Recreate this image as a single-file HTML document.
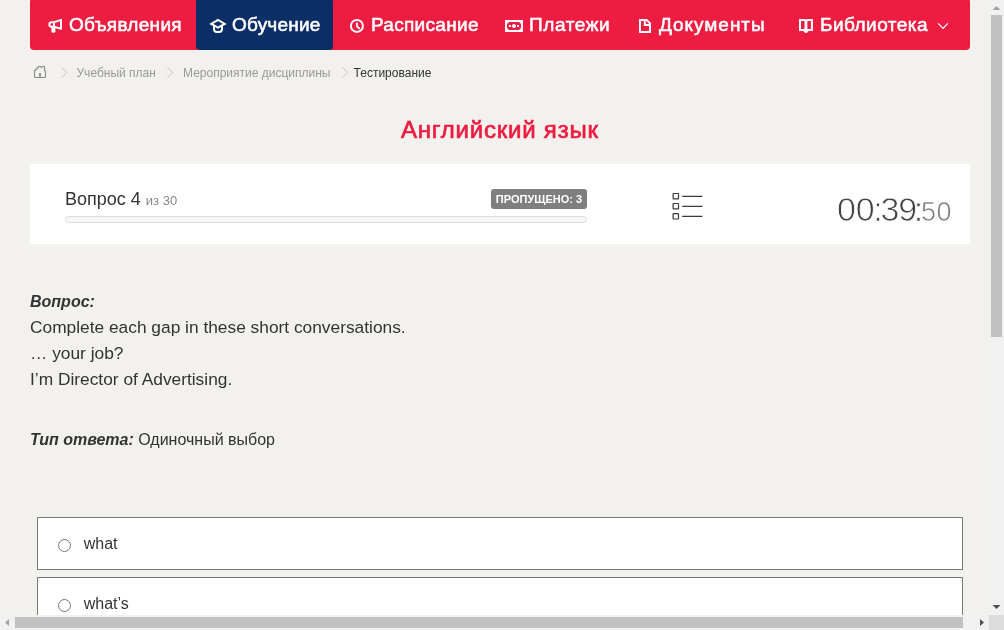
<!DOCTYPE html>
<html lang="ru">
<head>
<meta charset="utf-8">
<title>Тестирование</title>
<style>
*{box-sizing:border-box;margin:0;padding:0}
html,body{width:1004px;height:630px;overflow:hidden}
body{background:#f3f1ee;font-family:"Liberation Sans",sans-serif;color:#333;position:relative}
#wrap{position:absolute;left:0;top:0;width:1004px;height:630px;will-change:transform}
/* nav */
#nav{position:absolute;left:30px;top:-2px;width:940px;height:52px;background:#ed1c40;border-radius:4px}
#act{position:absolute;left:196px;top:-2px;width:137px;height:52px;background:#0b2e66;border-radius:4px}
.ni{position:absolute;top:13px;height:24px;line-height:24px;color:#fff;font-weight:normal;font-size:19px;white-space:nowrap;-webkit-text-stroke:0.55px #fff;transform-origin:0 50%}
#icons{position:absolute;left:0;top:0;width:1004px;height:100px;overflow:visible}
/* breadcrumb */
.bc{position:absolute;top:66px;font-size:12px;line-height:14px;color:#999;white-space:nowrap}
.bc.cur{color:#333}
/* title */
#title{position:absolute;left:401px;top:115px;font-weight:normal;font-size:24px;line-height:30px;color:#ed1c40;white-space:nowrap;-webkit-text-stroke:0.7px #ed1c40;letter-spacing:0.78px}
/* panel */
#panel{position:absolute;left:30px;top:164px;width:940px;height:80px;background:#fff}
#qn{position:absolute;left:65px;top:188px;font-size:18px;line-height:22px;color:#333;white-space:nowrap}
#qn small{font-size:13px;color:#888}
#badge{position:absolute;left:491px;top:189px;width:96px;height:20px;background:#7f7f7f;border-radius:3px;color:#fff;font-weight:bold;font-size:11px;line-height:20px;text-align:center;white-space:nowrap}
#prog{position:absolute;left:65px;top:216px;width:522px;height:7px;border:1px solid #ddd;border-radius:4px;background:#f7f7f7}
.tg{position:absolute;color:#444;white-space:nowrap;-webkit-text-stroke:0.75px #fff;text-align:center;width:30px;margin-left:-15px}
.tb{font-size:34px;line-height:34px;top:192px}
.ts{font-size:27px;line-height:27px;top:199px;color:#7c7c7c;-webkit-text-stroke:0.55px #fff}
/* question */
.q{position:absolute;left:30px;font-size:17.333px;line-height:26px;white-space:nowrap;color:#333}
.q b{font-style:italic;font-size:16px}
.q span{font-size:16px}
/* answers */
.ans{position:absolute;left:37px;width:926px;height:53px;background:#fff;border:1px solid #767676}
.ans .r{position:absolute;left:20px;top:21px;width:13px;height:13px;border:1px solid #767676;border-radius:50%;background:#fff}
.ans .t{position:absolute;left:45.7px;top:15px;font-size:16px;line-height:22px;color:#333}
/* scrollbars */
#vsb{position:absolute;left:989px;top:0;width:15px;height:615px;background:#f1f1f1}
#vsb .th{position:absolute;left:2px;top:15px;width:11px;height:322px;background:#c1c1c1}
#hsb{position:absolute;left:0;top:615px;width:989px;height:15px;background:#f1f1f1}
#hsb .th{position:absolute;left:15px;top:2px;width:948px;height:11px;background:#c1c1c1}
#corner{position:absolute;left:989px;top:615px;width:15px;height:15px;background:#dcdcdc}
#sbarrows{position:absolute;left:0;top:0;width:1004px;height:630px;pointer-events:none}
</style>
</head>
<body>
<div id="wrap">
<div id="nav"></div>
<div id="act"></div>
<div class="ni" style="left:69px;letter-spacing:0.3px">Объявления</div>
<div class="ni" style="left:232px;letter-spacing:0.2px">Обучение</div>
<div class="ni" style="left:371px;letter-spacing:0.3px">Расписание</div>
<div class="ni" style="left:529px;letter-spacing:0.6px">Платежи</div>
<div class="ni" style="left:659px;letter-spacing:0.97px">Документы</div>
<div class="ni" style="left:820px;letter-spacing:0.48px">Библиотека</div>

<svg id="icons" viewBox="0 0 1004 100" fill="none" stroke="#fff" stroke-width="2" stroke-linejoin="round" stroke-linecap="round">
  <!-- megaphone -->
  <path d="M54 22.2H51.6a2.25 2.25 0 0 0 0 4.5H54"/>
  <path d="M54 22.2L61 19.9V28.8L54 26.7Z"/>
  <rect x="51.4" y="26" width="4" height="6.8" rx="1.6" fill="#fff" stroke="none"/>
  <!-- graduation cap -->
  <path d="M211.3 23.9L218 20L224.7 23.9L218 27.6Z" stroke-linejoin="miter"/>
  <path d="M214 26.2V29A2.9 2.9 0 0 0 216.9 31.9H219.1A2.9 2.9 0 0 0 222 29V26.2"/>
  <!-- clock -->
  <circle cx="356.9" cy="25.9" r="6"/>
  <path d="M356.9 23.4V26.2L359.1 28.3" stroke-width="1.9"/>
  <!-- payment -->
  <rect x="505" y="20" width="18" height="12" fill="#fff" stroke="none"/>
  <path d="M509 22H519L521 24V28L519 30H509L507 28V24Z" fill="#ed1c40" stroke="none"/>
  <circle cx="514" cy="26" r="2" fill="#fff" stroke="none"/>
  <rect x="509" y="25" width="2" height="2" fill="#fff" stroke="none"/>
  <rect x="517" y="25" width="2" height="2" fill="#fff" stroke="none"/>
  <!-- document -->
  <path d="M640 20H646.6L650 23.4V32H640Z" stroke-linejoin="miter"/>
  <path d="M644.8 20.5V25H649.5" stroke-linejoin="miter" stroke-linecap="butt"/>
  <!-- book -->
  <path d="M799 19H805L806 19.8L807 19H813V31H808.8L806.8 33H805.2L803.2 31H799Z M801 21V29H804.5V21Z M807.4 21V29H810.9V21Z" fill="#fff" fill-rule="evenodd" stroke="none"/>
  <!-- chevron down -->
  <path d="M938.2 23.4L943 28.4L947.8 23.4" stroke-width="1.25" stroke-linejoin="miter" stroke-linecap="butt"/>
  <!-- home -->
  <path d="M35.5 77.5H44.5a1 1 0 0 0 1-1V71.4L44.5 70.4V66.5H42.4L41.4 67.6L40.4 66.5H38.9L34.5 71V76.5a1 1 0 0 0 1 1Z" stroke="#888" stroke-width="1.1"/>
  <path d="M40 73V77.5" stroke="#888" stroke-width="1.7" stroke-linecap="butt"/>
  <!-- breadcrumb chevrons -->
  <g stroke="#bdbdbd" stroke-width="0.9" stroke-linejoin="miter" stroke-linecap="butt">
    <path d="M61.5 67.3L66.7 72.5L61.5 77.7"/>
    <path d="M167.5 67.3L172.7 72.5L167.5 77.7"/>
    <path d="M342.3 67.3L347.5 72.5L342.3 77.7"/>
  </g>
</svg>

<div class="bc" style="left:76.5px">Учебный план</div>
<div class="bc" style="left:183px">Мероприятие дисциплины</div>
<div class="bc cur" style="left:353.6px">Тестирование</div>

<div id="title">Английский язык</div>

<div id="panel"></div>
<div id="qn">Вопрос 4 <small>из 30</small></div>
<div id="badge">ПРОПУЩЕНО: 3</div>
<div id="prog"></div>
<svg style="position:absolute;left:660px;top:185px;width:60px;height:45px" viewBox="660 185 60 45" fill="none" stroke="#3a3a3a" stroke-width="1.2">
  <rect x="673.1" y="193.5" width="5.4" height="5.4" rx="0.4"/>
  <rect x="673.1" y="203.5" width="5.4" height="5.4" rx="0.4"/>
  <rect x="673.1" y="213.6" width="5.4" height="5.4" rx="0.4"/>
  <path d="M682.2 196.3H702.4M682.2 206.4H702.4M682.2 216.3H702.4" stroke-width="1.3"/>
</svg>
<div class="tg tb" style="left:846.5px">0</div>
<div class="tg tb" style="left:865.3px">0</div>
<div class="tg tb" style="left:877.9px">:</div>
<div class="tg tb" style="left:890px">3</div>
<div class="tg tb" style="left:907.7px">9</div>
<div class="tg tb" style="left:918.5px">:</div>
<div class="tg ts" style="left:928.5px">5</div>
<div class="tg ts" style="left:944px">0</div>

<div class="q" style="top:288px"><b>Вопрос:</b></div>
<div class="q" style="top:314px">Complete each gap in these short conversations.</div>
<div class="q" style="top:340px">… your job?</div>
<div class="q" style="top:366px">I’m Director of Advertising.</div>
<div class="q" style="top:426px"><b>Тип ответа:</b><span> Одиночный выбор</span></div>

<div class="ans" style="top:517px"><div class="r"></div><div class="t">what</div></div>
<div class="ans" style="top:577px"><div class="r"></div><div class="t">what’s</div></div>

<div id="vsb"><div class="th"></div></div>
<div id="hsb"><div class="th"></div></div>
<div id="corner"></div>
<svg id="sbarrows" viewBox="0 0 1004 630">
  <path d="M992.5 10L996.5 6L1000.5 10Z" fill="#a3a3a3"/>
  <path d="M992.5 605L996.5 609L1000.5 605Z" fill="#505050"/>
  <path d="M9 619L5 622.5L9 626Z" fill="#a3a3a3"/>
  <path d="M980 619L984 622.5L980 626Z" fill="#505050"/>
</svg>
</div>
</body>
</html>
